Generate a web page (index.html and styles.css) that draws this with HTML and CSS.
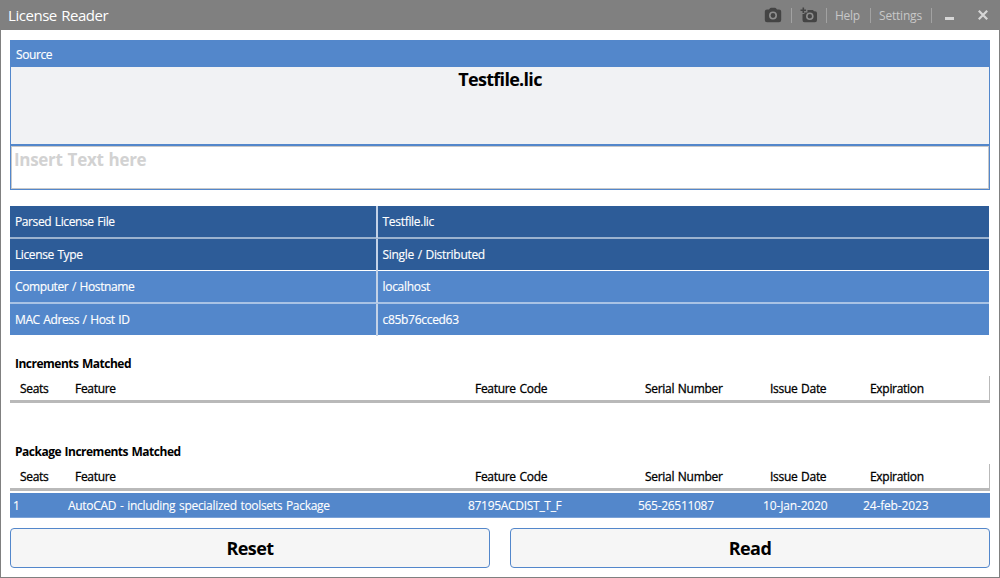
FILE: index.html
```html
<!DOCTYPE html>
<html lang="en">
<head>
<meta charset="utf-8">
<title>License Reader</title>
<link rel="stylesheet" href="styles.css">
</head>
<body>
<div class="window">
  <header class="titlebar">
    <h1 class="title">License Reader</h1>
    <nav class="tools">
      <svg class="camera" width="18" height="16" viewBox="0 0 18 16"><path fill="#444" fill-rule="evenodd" d="M3 2.500H5L6 1.300Q6.400 .8 7 .8H11Q11.600 .8 12 1.300L13 2.500H15Q17.200 2.500 17.200 4.500V13Q17.200 15.200 15 15.200H3Q.8 15.200 .8 13V4.500Q.8 2.500 3 2.500Z"/><circle cx="9" cy="8.500" r="3.200" fill="none" stroke="#8e8e8e" stroke-width="1.600"/></svg>
      <i class="sep"></i>
      <svg class="camera-add" width="18" height="16" viewBox="0 0 18 16"><path fill="#444" d="M2.500 7V13Q2.500 15.200 4.500 15.200H15Q17 15.200 17 13V6Q17 4.200 15 4.200H14L13 3H7.500V5.500H4.500V7Z"/><path d="M3.300 .5V6M.5 3.300H6" stroke="#444" stroke-width="1.600"/><circle cx="9.800" cy="9.200" r="3" fill="none" stroke="#8e8e8e" stroke-width="1.600"/></svg>
      <i class="sep"></i>
      <span class="help">Help</span>
      <i class="sep"></i>
      <span class="settings">Settings</span>
      <i class="sep"></i>
      <svg class="minimize" width="10" height="10" viewBox="0 0 10 10"><path d="M0 7H9V10H0Z" fill="#d6d6d6"/></svg>
      <svg class="close" width="10" height="10" viewBox="0 0 10 10"><path d="M.8 .8L9.200 9.200M9.200 .8L.8 9.200" stroke="#d6d6d6" stroke-width="2.200"/></svg>
    </nav>
  </header>
  <main class="content">
    <section class="source">
      <h2 class="source-head">Source</h2>
      <div class="drop">Testfile.lic</div>
      <div class="paste">Insert Text here</div>
    </section>
    <section class="info">
      <div class="pair dark"><span class="cell">Parsed License File</span><span class="cell">Testfile.lic</span></div>
      <div class="pair dark last"><span class="cell">License Type</span><span class="cell">Single / Distributed</span></div>
      <div class="pair"><span class="cell">Computer / Hostname</span><span class="cell">localhost</span></div>
      <div class="pair end"><span class="cell">MAC Adress / Host ID</span><span class="cell">c85b76cced63</span></div>
    </section>
    <section class="list increments">
      <h2 class="list-title">Increments Matched</h2>
      <div class="cols head"><span>Seats</span><span>Feature</span><span>Feature Code</span><span>Serial Number</span><span>Issue Date</span><span>Expiration</span></div>
    </section>
    <section class="list">
      <h2 class="list-title">Package Increments Matched</h2>
      <div class="cols head"><span>Seats</span><span>Feature</span><span>Feature Code</span><span>Serial Number</span><span>Issue Date</span><span>Expiration</span></div>
      <div class="cols row"><span>1</span><span>AutoCAD - including specialized toolsets Package</span><span>87195ACDIST_T_F</span><span>565-26511087</span><span class="date">10-Jan-2020</span><span class="date">24-feb-2023</span></div>
    </section>
    <div class="actions">
      <button class="btn">Reset</button>
      <button class="btn">Read</button>
    </div>
  </main>
</div>
</body>
</html>
```
FILE: styles.css
```css
* { box-sizing: border-box; }
body { margin: 0; font: 12px/16px "Open Sans", "Noto Sans", sans-serif; color: #000; letter-spacing: -0.3px; word-spacing: 0.9px; }
h1, h2 { margin: 0; }
.window { width: 1000px; height: 578px; border: 1px solid #808080; border-top: 0; background: #fff; }
.titlebar { height: 30px; background: #808080; display: flex; justify-content: space-between; align-items: center; padding: 0 11px 0 7px; }
.title { font-size: 15px; font-weight: 400; line-height: 20px; color: #fff; letter-spacing: -0.45px; }
.tools { display: flex; align-items: center; color: #c8c8c8; height: 30px; line-height: 18px; }
.help, .settings { padding-top: 2px; }
.sep { width: 1px; height: 15px; background: #a2a2a2; }
.camera { margin-right: 9px; }
.camera-add { margin: 0 8px; }
.help { width: 43px; padding-left: 8px; }
.settings { width: 60px; padding-left: 8px; letter-spacing: -0.2px; }
.minimize { margin: 0 23px 0 13px; }
.content { padding: 10px 9px 0; }
.source-head { height: 27px; background: #5387cb; color: #fff; font-size: 12px; font-weight: 400; line-height: 29px; padding-left: 6px; letter-spacing: -0.4px; -webkit-text-stroke: 0.15px; }
.drop { height: 79px; background: #f1f2f4; border: 1px solid #5387cb; border-top: 0; border-bottom-width: 2px; text-align: center; font-size: 18px; font-weight: 700; line-height: 25px; letter-spacing: -0.7px; }
.paste { height: 44px; border: 1px solid #5387cb; border-top: 0; box-shadow: inset 0 0 0 1px #c8c8c8; color: #d2d2d2; font-size: 17px; font-weight: 700; line-height: 28px; padding-left: 3px; letter-spacing: -0.3px; }
.info { margin-top: 16px; width: 979px; color: #fff; -webkit-text-stroke: 0.15px; }
.pair { display: grid; grid-template-columns: 368px 1fr; height: 33px; background: #5387cb; border-bottom: 2px solid #a9c3e5; }
.dark { background: #2d5c98; border-bottom-color: #9bb2cf; }
.last { height: 32px; border-bottom: 1px solid #fff; }
.end { height: 31px; border: 0; }
.cell { padding-left: 4.5px; line-height: 32px; }
.cell:first-child { padding-left: 5px; border-right: 2px solid #c3d2e7; letter-spacing: -0.4px; }
.list { padding-top: 21px; }
.increments { height: 88px; }
.list-title { font-size: 12px; font-weight: 700; line-height: 16px; padding-left: 5px; height: 20px; letter-spacing: -0.5px; }
.cols { display: grid; grid-template-columns: 55px 400px 170px 125px 100px 1fr; }
.head { height: 27px; border-right: 1px solid #b9b9b9; border-bottom: 3px solid #b9b9b9; padding-left: 10px; line-height: 26px; -webkit-text-stroke: 0.3px; }
.row { height: 25px; margin-top: 2px; padding-left: 3px; line-height: 25px; color: #fff; background: #5387cb; border-bottom: 1px solid #7ba2d7; -webkit-text-stroke: 0.1px; }
.date { letter-spacing: -0.15px; }
.actions { display: grid; grid-template-columns: 1fr 1fr; gap: 20px; margin-top: 10px; }
.btn { height: 40px; border: 1px solid #5387cb; border-radius: 4px; background: #f6f6f6; color: #000; font: 700 18px/24px "Open Sans", "Noto Sans", sans-serif; letter-spacing: -0.6px; padding: 0; }
```
